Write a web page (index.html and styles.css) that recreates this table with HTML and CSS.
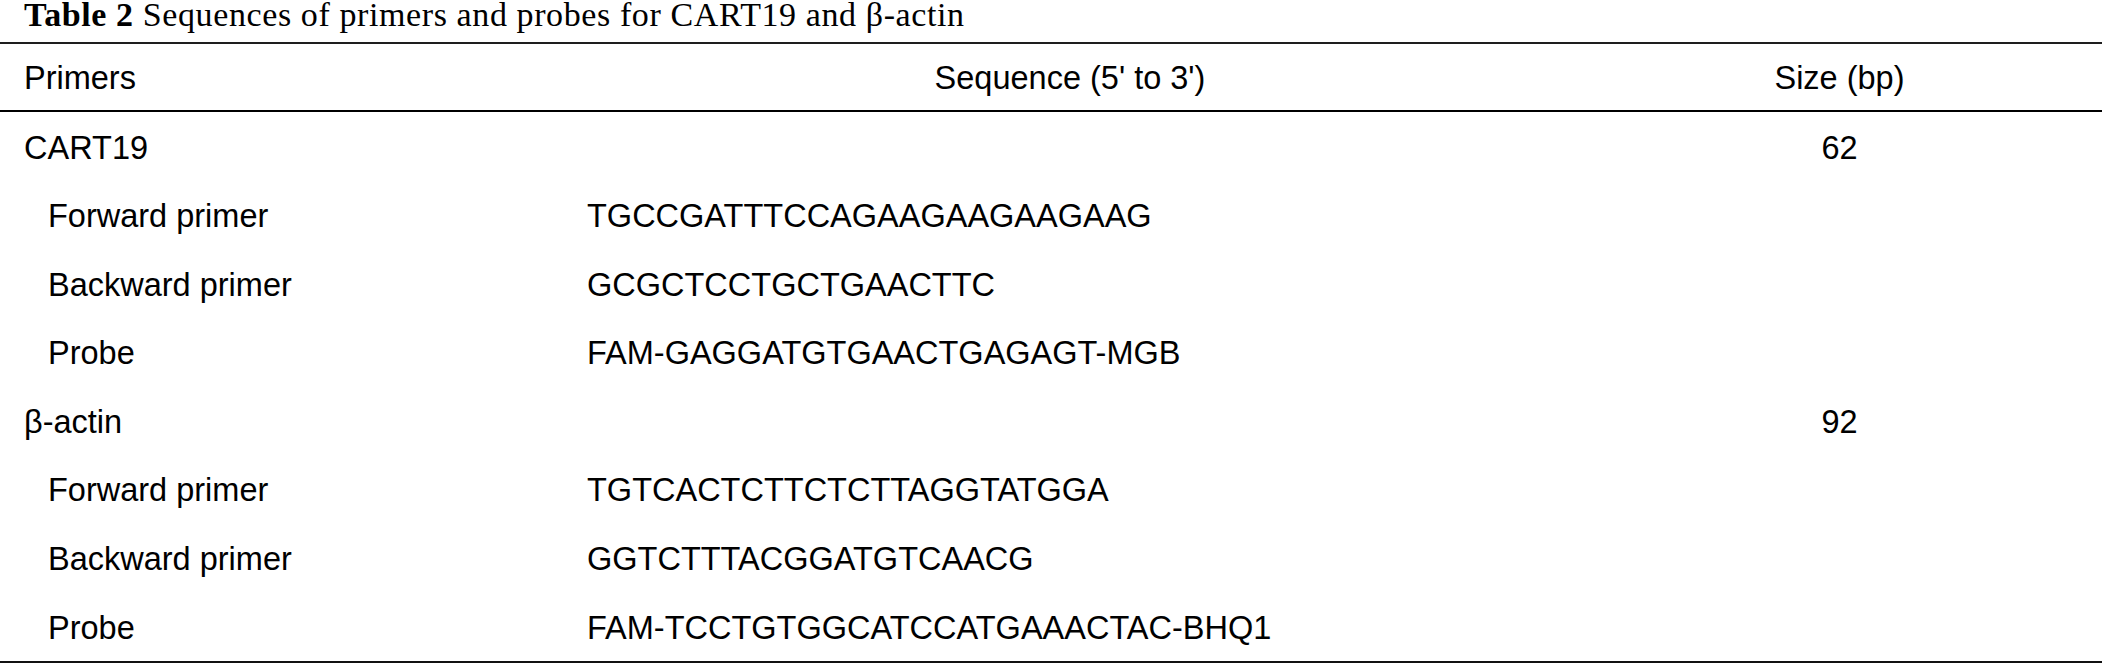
FILE: index.html
```html
<!DOCTYPE html>
<html lang="en">
<head>
<meta charset="utf-8">
<title>Table 2</title>
<link rel="stylesheet" href="styles.css">
</head>
<body>
<div class="caption"><b>Table 2</b> Sequences of primers and probes for CART19 and β-actin</div>
<table class="data">
  <colgroup>
    <col class="c1"><col class="c2"><col class="c3">
  </colgroup>
  <thead>
    <tr><th class="left">Primers</th><th class="center">Sequence (5' to 3')</th><th class="center">Size (bp)</th></tr>
  </thead>
  <tbody>
    <tr><td>CART19</td><td></td><td class="center">62</td></tr>
    <tr><td class="indent">Forward primer</td><td>TGCCGATTTCCAGAAGAAGAAGAAG</td><td></td></tr>
    <tr><td class="indent">Backward primer</td><td>GCGCTCCTGCTGAACTTC</td><td></td></tr>
    <tr><td class="indent">Probe</td><td>FAM-GAGGATGTGAACTGAGAGT-MGB</td><td></td></tr>
    <tr><td>β-actin</td><td></td><td class="center">92</td></tr>
    <tr><td class="indent">Forward primer</td><td>TGTCACTCTTCTCTTAGGTATGGA</td><td></td></tr>
    <tr><td class="indent">Backward primer</td><td>GGTCTTTACGGATGTCAACG</td><td></td></tr>
    <tr><td class="indent">Probe</td><td>FAM-TCCTGTGGCATCCATGAAACTAC-BHQ1</td><td></td></tr>
  </tbody>
</table>
</body>
</html>
```
FILE: styles.css
```css
html, body {
  margin: 0;
  padding: 0;
  background: #fff;
}
body {
  color: #000;
  width: 2102px;
}
.caption {
  font-family: "Liberation Serif", "Times New Roman", serif;
  font-size: 34px;
  letter-spacing: 0.6px;
  line-height: 29px;
  height: 29px;
  padding-left: 24px;
  margin-bottom: 13px;
  white-space: nowrap;
}
.caption b {
  font-weight: bold;
}
.data {
  width: 2102px;
  table-layout: fixed;
  border-collapse: collapse;
  border-top: 2px solid #1e1e1e;
  border-bottom: 2px solid #111;
  font-family: "Liberation Sans", Arial, sans-serif;
  font-size: 32.5px;
}
.c1 { width: 563px; }
.c2 { width: 1014px; }
.c3 { width: 525px; }
.data thead tr {
  border-bottom: 2px solid #000;
}
.data th {
  font-weight: normal;
  line-height: 36px;
  padding: 16px 0 14px 24px;
  white-space: nowrap;
}
.data td {
  line-height: 36px;
  padding: 17.5px 0 15.1px 24px;
  white-space: nowrap;
}
.data .left { text-align: left; }
.data .center { text-align: center; padding-left: 0; }
.data td.indent { padding-left: 48px; }
```
